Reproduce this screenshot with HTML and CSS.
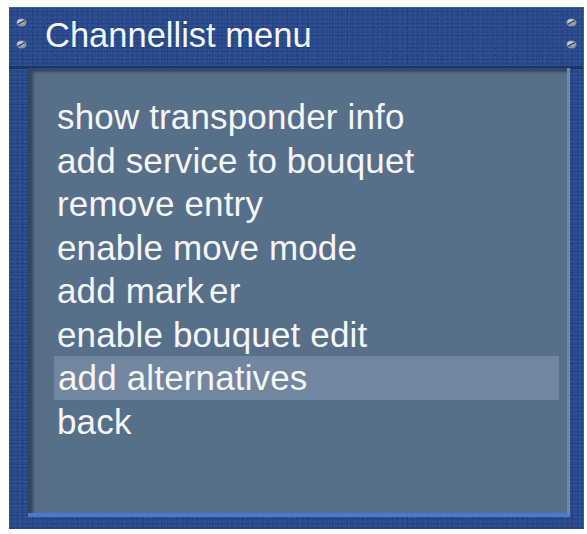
FILE: index.html
```html
<!DOCTYPE html>
<html>
<head>
<meta charset="utf-8">
<link rel="stylesheet" href="styles.css">
</head>
<body>
<div class="frame">
  <svg class="screw sl1" viewBox="0 0 11 9"><ellipse cx="5.5" cy="4.5" rx="5" ry="4" fill="#8d97a6"/><ellipse cx="4.8" cy="3.6" rx="3.4" ry="2.4" fill="#c4cad4"/><path d="M2.3 6.2 L8.6 2.6" stroke="#384253" stroke-width="1.4"/></svg>
  <svg class="screw sl2" viewBox="0 0 11 9"><ellipse cx="5.5" cy="4.5" rx="5" ry="4" fill="#8d97a6"/><ellipse cx="4.8" cy="3.6" rx="3.4" ry="2.4" fill="#c4cad4"/><path d="M2.3 6.2 L8.6 2.6" stroke="#384253" stroke-width="1.4"/></svg>
  <svg class="screw sr1" viewBox="0 0 11 9"><ellipse cx="5.5" cy="4.5" rx="5" ry="4" fill="#8d97a6"/><ellipse cx="4.8" cy="3.6" rx="3.4" ry="2.4" fill="#c4cad4"/><path d="M2.3 6.2 L8.6 2.6" stroke="#384253" stroke-width="1.4"/></svg>
  <svg class="screw sr2" viewBox="0 0 11 9"><ellipse cx="5.5" cy="4.5" rx="5" ry="4" fill="#8d97a6"/><ellipse cx="4.8" cy="3.6" rx="3.4" ry="2.4" fill="#c4cad4"/><path d="M2.3 6.2 L8.6 2.6" stroke="#384253" stroke-width="1.4"/></svg>
  <div class="titlebar">Channellist menu</div>
  <div class="body-area">
    <div class="panel">
      <ul class="menu">
        <li>show transponder info</li>
        <li>add service to bouquet</li>
        <li>remove entry</li>
        <li>enable move mode</li>
        <li>add mark<span class="kgap">er</span></li>
        <li>enable bouquet edit</li>
        <li class="sel">add alternatives</li>
        <li>back</li>
      </ul>
    </div>
  </div>
</div>
</body>
</html>
```

FILE: styles.css
```css
html, body {
  margin: 0;
  padding: 0;
  background: #ffffff;
}

body {
  font-family: "Liberation Sans", Arial, Helvetica, sans-serif;
}

.frame {
  position: relative;
  margin: 7px 0 0 9px;
  width: 575px;
  height: 522px;
  box-sizing: border-box;
  display: flex;
  flex-direction: column;
  background-color: #28498b;
  background-image:
    radial-gradient(circle at 30% 40%, rgba(120,150,210,0.20) 0 0.7px, transparent 1px),
    radial-gradient(circle at 70% 20%, rgba(10,25,70,0.28) 0 0.8px, transparent 1.1px),
    radial-gradient(circle at 50% 70%, rgba(140,160,220,0.14) 0 0.6px, transparent 1px),
    radial-gradient(circle at 20% 80%, rgba(10,25,70,0.18) 0 0.9px, transparent 1.2px);
  background-size: 3px 4px, 5px 3px, 7px 5px, 11px 7px;
  border-top: 1px solid #3d5fa6;
  border-right: 1px solid #3a5ca2;
}

.screw {
  position: absolute;
  width: 11px;
  height: 9px;
}
.sl1 { left: 7px; top: 10px; }
.sl2 { left: 7px; top: 32px; }
.sr1 { left: 557px; top: 10px; }
.sr2 { left: 557px; top: 32px; }

.titlebar {
  height: 60px;
  box-sizing: border-box;
  padding: 7px 0 0 36px;
  font-size: 34.5px;
  line-height: 40px;
  color: #f2f4f8;
  border-bottom: 2px solid #1c3468;
  box-shadow: 0 1px 0 rgba(10,20,50,0.4);
}

.body-area {
  flex: 1;
  display: flex;
  padding: 0 13px 12px 19px;
}

.panel {
  flex: 1;
  background: #586f8a;
  border-right: 3px solid #7288a6;
  border-bottom: 4px solid #4a79d2;
  box-shadow: inset 5px 4px 3px rgba(22,36,62,0.55);
}

.menu {
  list-style: none;
  margin: 0;
  padding: 27px 8px 0 26px;
}

.menu li {
  height: 43.5px;
  line-height: 43.5px;
  padding-left: 3px;
  font-size: 35px;
  letter-spacing: 0.15px;
  color: #f4f5f7;
  white-space: nowrap;
}

.menu li.sel {
  background: #72869f;
  padding-left: 4px;
}

.kgap {
  margin-left: 5px;
}
```
